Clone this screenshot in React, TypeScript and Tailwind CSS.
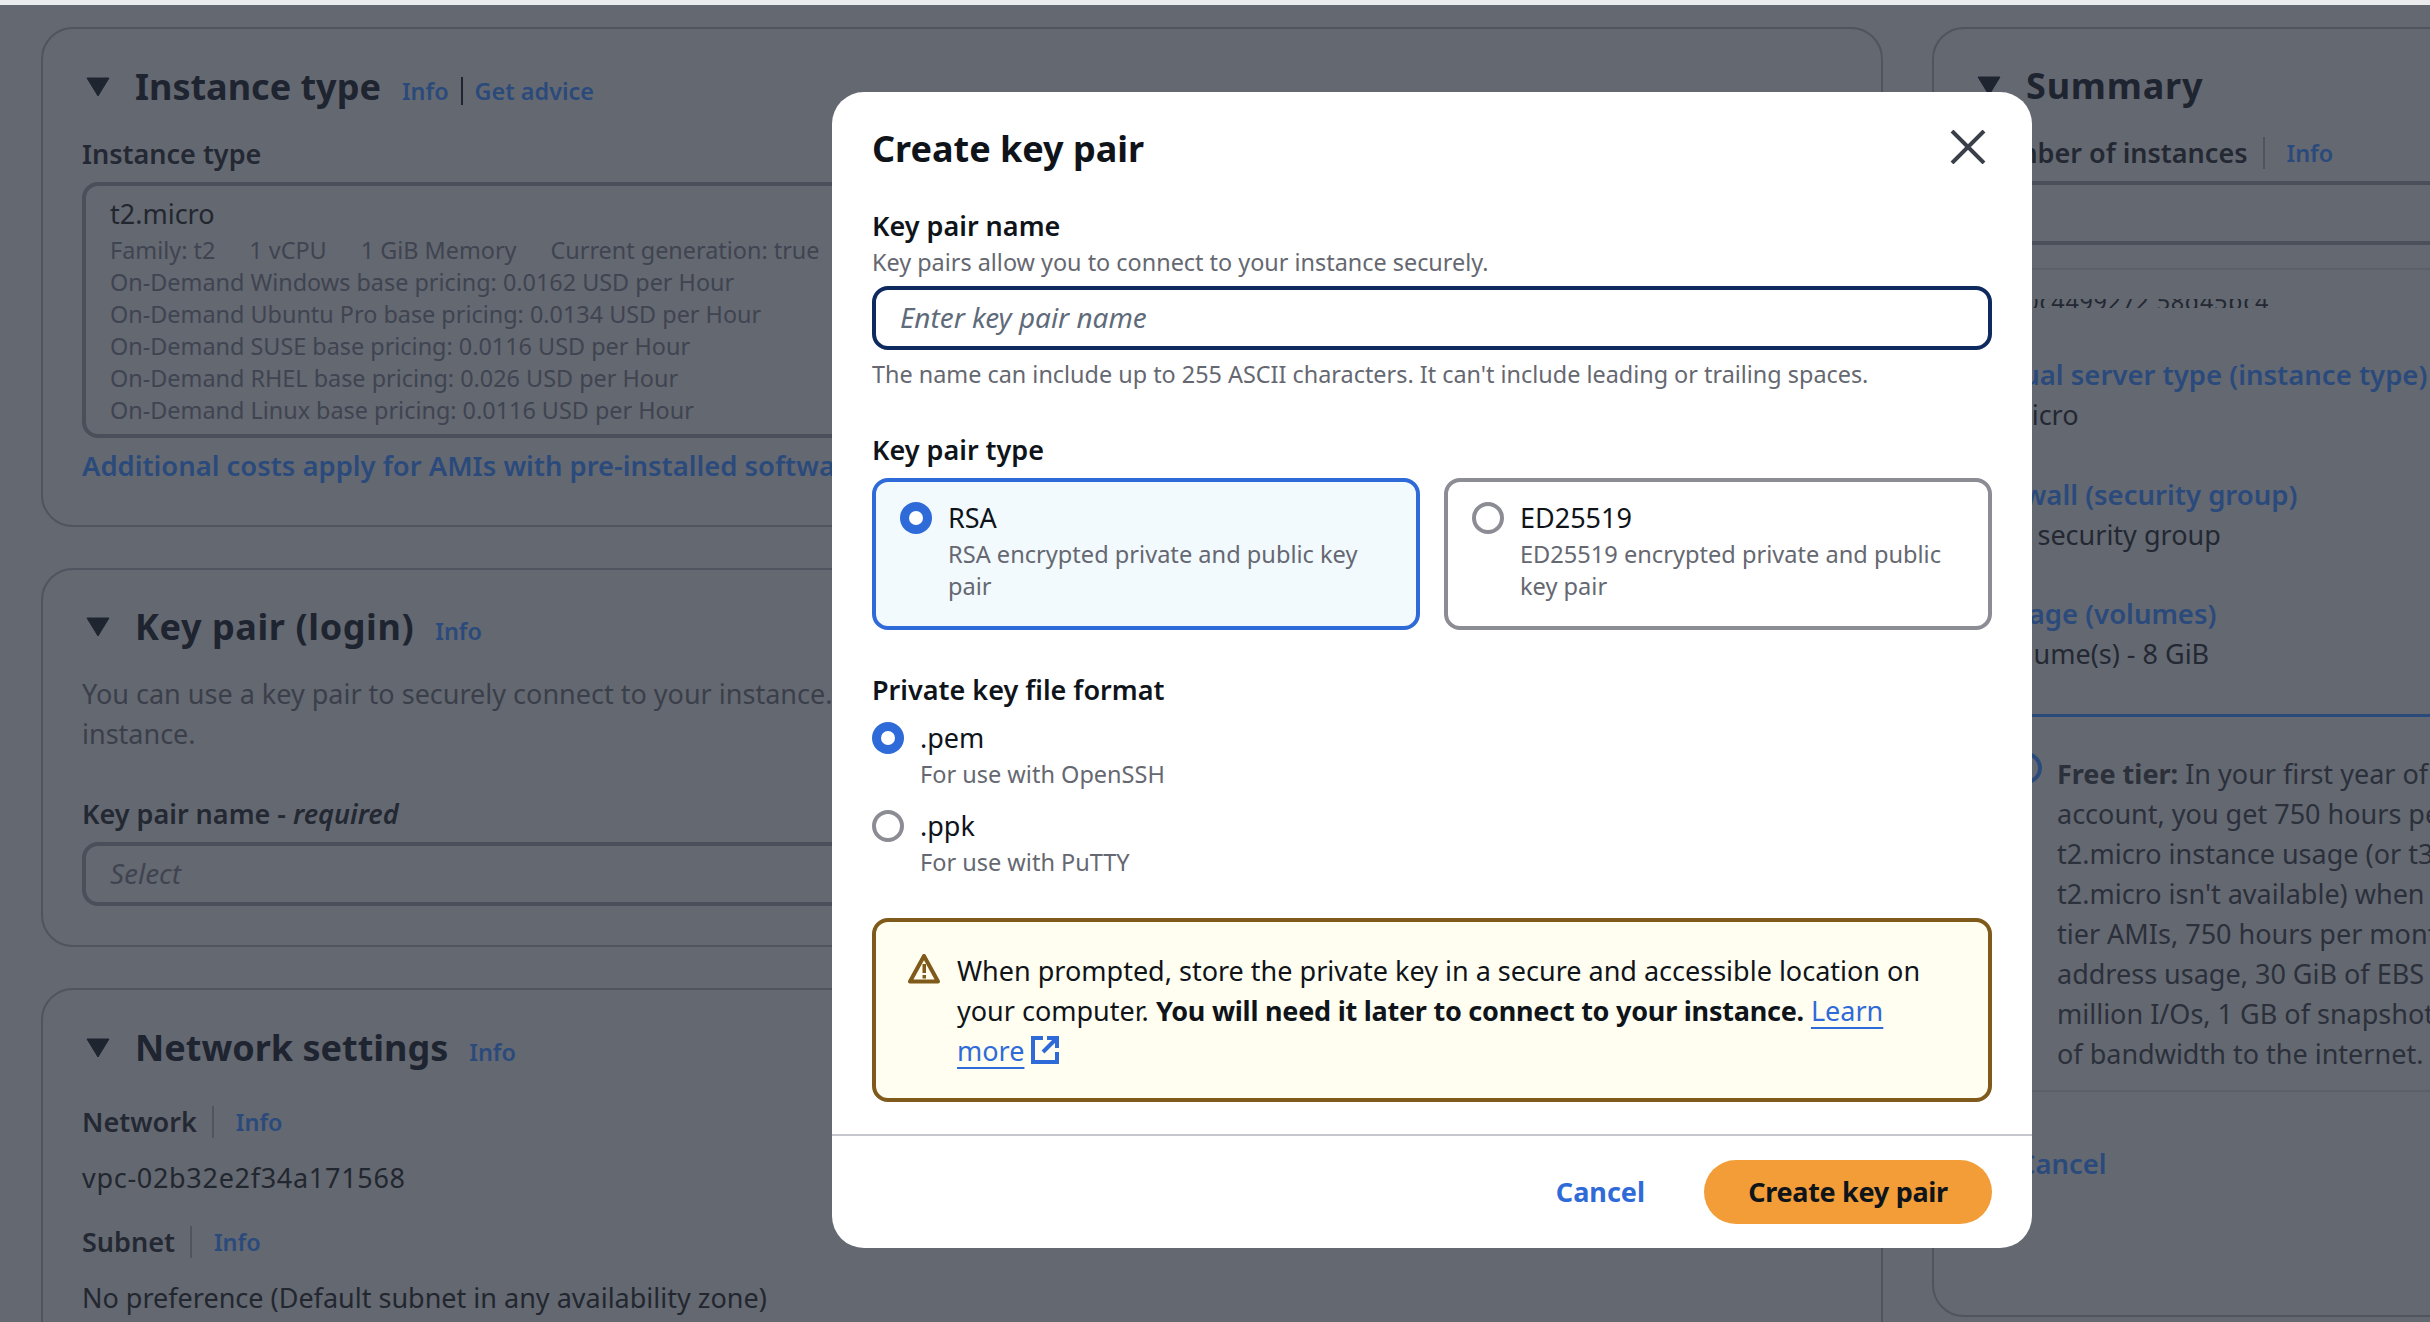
const Caret = () => (
  <svg width="24" height="20" viewBox="0 0 24 20" className="shrink-0">
    <path d="M1 1h22L12 19z" fill="#1e2430" stroke="#1e2430" strokeWidth="1" strokeLinejoin="round" />
  </svg>
);

const Radio = ({ checked }: { checked?: boolean }) =>
  checked ? (
    <span className="flex h-8 w-8 shrink-0 items-center justify-center rounded-full bg-[#2f6bd8]">
      <span className="h-[14px] w-[14px] rounded-full bg-white" />
    </span>
  ) : (
    <span className="h-8 w-8 shrink-0 rounded-full border-4 border-[#8c8c94] bg-white" />
  );

const SectionTitle = ({ title, titleClass, children }: { title: string; titleClass?: string; children?: React.ReactNode }) => (
  <div className="flex h-12 items-center">
    <span className="ml-[4px] mr-[25px] flex">
      <Caret />
    </span>
    <h2 className={`text-[36px] leading-[48px] font-bold text-[#1e2430] ${titleClass ?? ""}`}>{title}</h2>
    <div className="ml-[21px] mt-2 flex items-center text-[23.4px] leading-8 font-semibold text-[#2b4a7c]">{children}</div>
  </div>
);

const InfoLabel = ({ label }: { label: string }) => (
  <div className="flex h-10 items-center">
    <span className="text-[27px] leading-10 font-semibold text-[#232833]">{label}</span>
    <span className="ml-[15px] mr-[18px] h-8 w-[2px] bg-[#50545f]" />
    <span className="ml-1 text-[23.4px] leading-8 font-semibold text-[#2b4a7c]">Info</span>
  </div>
);

const PricingLines = [
  "On-Demand Windows base pricing: 0.0162 USD per Hour",
  "On-Demand Ubuntu Pro base pricing: 0.0134 USD per Hour",
  "On-Demand SUSE base pricing: 0.0116 USD per Hour",
  "On-Demand RHEL base pricing: 0.026 USD per Hour",
  "On-Demand Linux base pricing: 0.0116 USD per Hour",
];

const FreeTierLines = [
  "account, you get 750 hours per month of",
  "t2.micro instance usage (or t3.micro where",
  "t2.micro isn't available) when used with free",
  "tier AMIs, 750 hours per month of public IPv4",
  "address usage, 30 GiB of EBS storage, 2",
  "million I/Os, 1 GB of snapshots, and 100 GB",
  "of bandwidth to the internet.",
];

const SummaryItem = ({ title, value, className }: { title: string; value: string; className?: string }) => (
  <div className={className}>
    <div className="text-[27.5px] leading-10 font-semibold text-[#2b4a7c]">{title}</div>
    <div className="text-[27px] leading-10 text-[#232833]">{value}</div>
  </div>
);

const KeyTile = ({ name, text, checked, className }: { name: string; text: string; checked?: boolean; className: string }) => (
  <div className={`flex h-[152px] gap-4 rounded-2xl border-4 pl-6 pr-6 pt-4 ${className}`}>
    <span className="mt-1 flex shrink-0">
      <Radio checked={checked} />
    </span>
    <div>
      <div className="text-[27px] leading-10 text-[#0f141a]">{name}</div>
      <div className="text-[23.6px] leading-8 text-[#656871]">{text}</div>
    </div>
  </div>
);

const FormatOption = ({ name, text, checked, className }: { name: string; text: string; checked?: boolean; className?: string }) => (
  <div className={className}>
    <div className="flex h-10 items-center gap-4">
      <Radio checked={checked} />
      <span className="text-[27px] leading-10 text-[#0f141a]">{name}</span>
    </div>
    <div className="pl-12 text-[23.5px] leading-8 text-[#656871]">{text}</div>
  </div>
);

const CreateKeyPairModal = () => (
  <div className="absolute left-[832px] top-[92px] h-[1156px] w-[1200px] overflow-hidden rounded-[32px] bg-white">
    <div className="px-10 pt-[33px]">
      <div className="flex h-12 items-center justify-between">
        <h1 className="text-[36px] leading-[48px] font-bold text-[#0f141a]">Create key pair</h1>
        <svg width="36" height="34" viewBox="0 0 36 34" className="mr-[6px] -mt-[4px]">
          <path d="M2 1l32 32M34 1L2 33" stroke="#3b3f4a" strokeWidth="4" fill="none" />
        </svg>
      </div>

      <div className="mt-[33px] text-[27px] leading-10 font-semibold text-[#0f141a]">Key pair name</div>
      <div className="text-[23.4px] leading-8 text-[#656871]">Key pairs allow you to connect to your instance securely.</div>
      <div className="mt-2 flex h-16 items-center rounded-2xl border-4 border-[#0f2a5f] pl-6">
        <span className="text-[27.9px] italic text-[#5f6b7a]">Enter key pair name</span>
      </div>
      <div className="mt-2 text-[23.4px] leading-8 text-[#656871]">
        The name can include up to 255 ASCII characters. It can't include leading or trailing spaces.
      </div>

      <div className="mt-10 text-[27px] leading-10 font-semibold text-[#0f141a]">Key pair type</div>
      <div className="mt-2 grid grid-cols-2 gap-6">
        <KeyTile checked name="RSA" text="RSA encrypted private and public key pair" className="border-[#2f6bd8] bg-[#f2fafe]" />
        <KeyTile name="ED25519" text="ED25519 encrypted private and public key pair" className="border-[#8c8c94] bg-white" />
      </div>

      <div className="mt-10 text-[27px] leading-10 font-semibold text-[#0f141a]">Private key file format</div>
      <FormatOption checked name=".pem" text="For use with OpenSSH" className="mt-2" />
      <FormatOption name=".ppk" text="For use with PuTTY" className="mt-4" />

      <div className="mt-10 flex h-[184px] gap-[17px] rounded-2xl border-4 border-[#7f5a1b] bg-[#fffef0] pl-8 pr-12 pt-[29px]">
        <svg width="32" height="30" viewBox="0 0 32 30" className="mt-[3px] shrink-0">
          <path d="M16 2L2 27.5h28z" fill="none" stroke="#7f5a1b" strokeWidth="4" strokeLinejoin="round" />
          <path d="M14.5 10h3.5v9h-3.5zM14.5 21h3.5v3.5h-3.5z" fill="#7f5a1b" />
        </svg>
        <p className="text-[27px] leading-10 text-[#0f141a]">
          When prompted, store the private key in a secure and accessible location on your computer.{" "}
          <b className="font-bold tracking-[-0.24px]">You will need it later to connect to your instance.</b>{" "}
          <span className="text-[#2f6bd8] underline underline-offset-[6px] decoration-2">Learn more</span>{" "}
          <svg width="28" height="28" viewBox="0 0 28 28" className="inline-block align-[-3px]">
            <path d="M12 2H2v24h24V16" fill="none" stroke="#2f6bd8" strokeWidth="4" />
            <path d="M16 2h10v10M25 3L12 16" fill="none" stroke="#2f6bd8" strokeWidth="4" />
          </svg>
        </p>
      </div>
    </div>

    <div className="mt-8 flex h-[114px] items-start justify-end border-t-2 border-[#c6c6cd] pr-10 pt-6">
      <span className="mr-[59px] flex h-16 items-center text-[27px] font-bold text-[#2f6bd8]">Cancel</span>
      <button className="h-16 w-[288px] rounded-full bg-[#f29d38] text-[27px] font-bold tracking-[-0.3px] text-[#0f141a]">Create key pair</button>
    </div>
  </div>
);

export default function App() {
  return (
    <div className="relative h-[1322px] w-[2430px] overflow-hidden bg-[#646871] font-['Noto_Sans',sans-serif]">
      <div className="h-[5px] bg-[#e9ebed]" />

      <div className="flex w-[2600px] gap-[49px] pl-[41px] pt-[22px]">
        <div className="flex w-[1842px] shrink-0 flex-col gap-[41px]">
          <section className="h-[500px] rounded-[32px] border-2 border-[#50545f] px-[39px] pt-[34px]">
            <SectionTitle title="Instance type">
              <span>Info</span>
              <span className="mx-[12px] h-7 w-[2px] bg-[#1e2430]" />
              <span>Get advice</span>
            </SectionTitle>
            <div className="mt-[23px] text-[27px] leading-10 font-semibold text-[#232833]">Instance type</div>
            <div className="mt-2 h-[256px] rounded-2xl border-4 border-[#4b4f5a] pl-6 pt-2">
              <div className="text-[27px] leading-10 text-[#22272f]">t2.micro</div>
              <div className="flex gap-[34px] text-[23.4px] leading-8 text-[#3f4450]">
                <span>Family: t2</span>
                <span>1 vCPU</span>
                <span>1 GiB Memory</span>
                <span>Current generation: true</span>
              </div>
              {PricingLines.map((line) => (
                <div key={line} className="text-[23.4px] leading-8 text-[#3f4450]">
                  {line}
                </div>
              ))}
            </div>
            <div className="mt-2 text-[27.4px] leading-10 font-semibold text-[#2b4a7c]">
              Additional costs apply for AMIs with pre-installed software
            </div>
          </section>

          <section className="h-[379px] rounded-[32px] border-2 border-[#50545f] px-[39px] pt-[33px]">
            <SectionTitle title="Key pair (login)" titleClass="tracking-[0.6px]">
              <span>Info</span>
            </SectionTitle>
            <p className="mt-[23px] text-[27px] leading-10 text-[#3a3f4a]">
              You can use a key pair to securely connect to your instance. Ensure you have access to the selected key pair before you launch the
              <br />
              instance.
            </p>
            <div className="mt-10 text-[27px] leading-10 font-semibold text-[#232833]">
              Key pair name - <i className="font-semibold">required</i>
            </div>
            <div className="mt-2 flex h-16 items-center rounded-2xl border-4 border-[#4b4f5a] pl-6">
              <span className="text-[27.9px] italic text-[#3f4450]">Select</span>
            </div>
          </section>

          <section className="h-[500px] rounded-[32px] border-2 border-[#50545f] px-[39px] pt-[34px]">
            <SectionTitle title="Network settings">
              <span>Info</span>
            </SectionTitle>
            <div className="mt-[30px]">
              <InfoLabel label="Network" />
            </div>
            <div className="mt-4 text-[27px] leading-10 tracking-[0.7px] text-[#22272f]">vpc-02b32e2f34a171568</div>
            <div className="mt-6">
              <InfoLabel label="Subnet" />
            </div>
            <div className="mt-4 text-[27px] leading-10 text-[#22272f]">No preference (Default subnet in any availability zone)</div>
          </section>
        </div>

        <aside className="h-[1290px] w-[660px] shrink-0 rounded-[32px] border-2 border-[#50545f] pl-[40px] pt-[34px]">
          <div className="-mt-[1px] -ml-[1px]">
            <SectionTitle title="Summary" titleClass="tracking-[0.8px]" />
          </div>
          <div className="mt-[23px] -ml-[1px]">
            <InfoLabel label="Number of instances" />
          </div>
          <div className="mt-2 h-16 rounded-2xl border-4 border-[#4b4f5a]" />
          <div className="mt-[23px] h-[2px] bg-[#5c606a]" />
          <div className="mt-[29px] flex h-[9px] items-end overflow-hidden">
            <span className="-mb-[9px] text-[23.4px] leading-8 tracking-[0.7px] text-[#232833]">ami-0c4499272 58d45bc4</span>
          </div>
          <SummaryItem title="Virtual server type (instance type)" value="t2.micro" className="mt-[47px]" />
          <SummaryItem title="Firewall (security group)" value="New security group" className="mt-10" />
          <SummaryItem title="Storage (volumes)" value="1 volume(s) - 8 GiB" className="mt-[39px]" />
          <div className="mt-10 h-[3px] bg-[#2b4a7c]" />
          <div className="mt-[37px] flex">
            <svg width="32" height="32" viewBox="0 0 32 32" className="ml-[36px] mr-[15px] -mt-[2px] shrink-0">
              <circle cx="16" cy="16" r="14" fill="none" stroke="#2b4a7c" strokeWidth="4" />
            </svg>
            <div className="whitespace-nowrap text-[27px] leading-10 text-[#2b303b]">
              <div>
                <b className="font-bold">Free tier:</b> In your first year of opening an AWS
              </div>
              {FreeTierLines.map((line) => (
                <div key={line}>{line}</div>
              ))}
            </div>
          </div>
          <div className="mt-4 h-[2px] bg-[#5c606a]" />
          <div className="mt-[52px] pl-[44px] text-[27.4px] leading-10 font-semibold text-[#2b4a7c]">Cancel</div>
        </aside>
      </div>

      <CreateKeyPairModal />
    </div>
  );
}
